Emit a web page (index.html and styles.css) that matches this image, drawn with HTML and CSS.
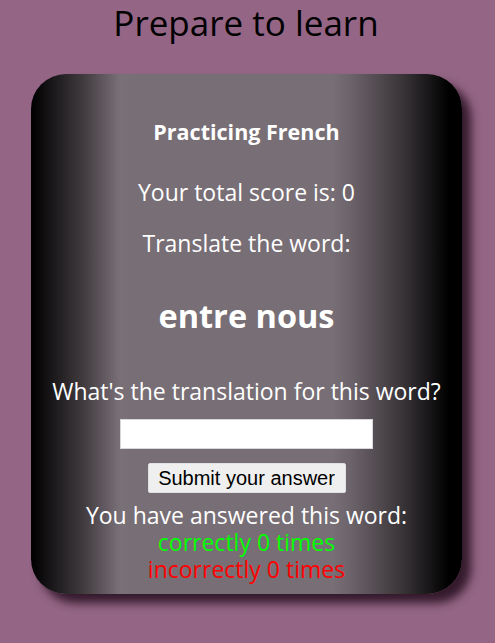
FILE: index.html
```html
<!DOCTYPE html>
<html>
<head>
<meta charset="utf-8">
<link rel="stylesheet" href="styles.css">
</head>
<body>
<h1 class="title">Prepare to learn</h1>
<div class="card">
  <h3 class="lang">Practicing French</h3>
  <p class="score">Your total score is: 0</p>
  <p class="prompt">Translate the word:</p>
  <h2 class="word">entre nous</h2>
  <p class="question">What's the translation for this word?</p>
  <input class="answer" type="text">
  <button class="submit">Submit your answer</button>
  <p class="stats">You have answered this word:</p>
  <p class="correct">correctly 0 times</p>
  <p class="incorrect">incorrectly 0 times</p>
</div>
</body>
</html>
```
FILE: styles.css
```css
html, body { margin: 0; padding: 0; }
body {
  background: #946585;
  font-family: "Open Sans", "Noto Sans", sans-serif;
  height: 643px;
  display: flex;
  flex-direction: column;
  align-items: center;
}
.title {
  margin: 1px 0 0 -3px;
  font-size: 35px;
  font-weight: 400;
  line-height: 44px;
  color: #000;
}
.card {
  margin: 29px 0 0 -2px;
  width: 431px;
  height: 520px;
  box-sizing: border-box;
  border-radius: 35px;
  background: linear-gradient(to right, #000 0%, #0a090a 2%, #3f3a3e 12%, #766c74 20%, #7a7078 21%, #786e75 23%, #786e75 70%, #6d646b 74%, #3a3539 86%, #000 97%, #000 100%);
  box-shadow: 9px 9px 10px rgba(20,0,15,0.75);
  display: flex;
  flex-direction: column;
  align-items: center;
  color: #fff;
  padding-top: 44px;
  text-align: center;
}
.card p, .card h2, .card h3 { margin: 0; }
.lang { font-size: 21.5px; font-weight: 700; line-height: 28px; }
.score { font-size: 23px; line-height: 30px; margin-top: 31px !important; }
.prompt { font-size: 23px; line-height: 30px; margin-top: 21px !important; }
.word { font-size: 32.5px; font-weight: 700; line-height: 40px; margin-top: 38px !important; }
.question { font-size: 23px; line-height: 30px; margin-top: 40px !important; }
.answer {
  margin-top: 13px;
  width: 253px;
  height: 30px;
  box-sizing: border-box;
  border: 1px solid #d8d8d8;
  background: #fff;
}
.submit {
  margin-top: 14px;
  width: 198px;
  height: 30px;
  padding: 0;
  font-family: "Liberation Sans", Arial, sans-serif;
  font-size: 20px;
  color: #000;
  background: #efefef;
  border: 1px solid #e0e0e0;
  border-radius: 2px;
}
.stats { font-size: 23px; line-height: 27px; margin-top: 9px !important; }
.correct { font-size: 23px; line-height: 27px; color: #00ff00; }
.incorrect { font-size: 23px; line-height: 27px; color: #ff0000; }
```
